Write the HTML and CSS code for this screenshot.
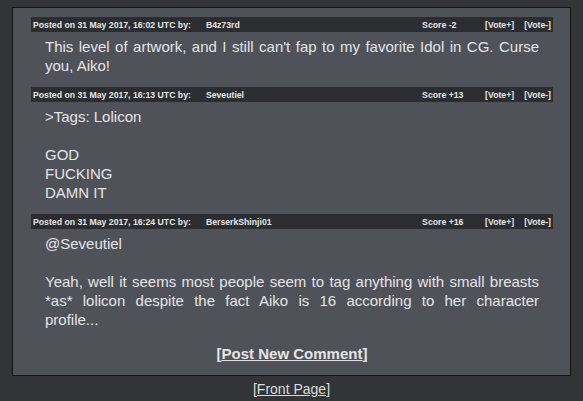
FILE: index.html
```html
<!DOCTYPE html>
<html>
<head>
<meta charset="utf-8">
<link rel="stylesheet" href="styles.css">
</head>
<body>
<div class="panel">
  <div class="comment">
    <div class="bar">
      <span class="posted">Posted on 31 May 2017, 16:02 UTC by:</span>
      <span class="user">B4z73rd</span>
      <span class="score">Score -2</span>
      <span class="vote vp">[Vote+]</span>
      <span class="vote">[Vote-]</span>
    </div>
    <div class="text">This level of artwork, and I still can't fap to my favorite Idol in CG. Curse you, Aiko!</div>
  </div>
  <div class="comment">
    <div class="bar">
      <span class="posted">Posted on 31 May 2017, 16:13 UTC by:</span>
      <span class="user">Seveutiel</span>
      <span class="score">Score +13</span>
      <span class="vote vp">[Vote+]</span>
      <span class="vote">[Vote-]</span>
    </div>
    <div class="text">&gt;Tags: Lolicon<br><br>GOD<br>FUCKING<br>DAMN IT</div>
  </div>
  <div class="comment">
    <div class="bar">
      <span class="posted">Posted on 31 May 2017, 16:24 UTC by:</span>
      <span class="user">BerserkShinji01</span>
      <span class="score">Score +16</span>
      <span class="vote vp">[Vote+]</span>
      <span class="vote">[Vote-]</span>
    </div>
    <div class="text justify-all">@Seveutiel<br><br>Yeah, well it seems most people seem to tag anything with small breasts *as* lolicon despite the fact Aiko is 16 according to her character<br>profile...</div>
  </div>
  <div class="postnew">[<a href="#">Post New Comment</a>]</div>
</div>
<div class="footer">[<a href="#">Front Page</a>]</div>
</body>
</html>
```
FILE: styles.css
```css
html, body {
  margin: 0;
  padding: 0;
  background: #333438;
}
body {
  padding: 7px 12px 0 12px;
  font-family: "Liberation Sans", Arial, sans-serif;
  color: #e4e4e6;
}
.panel {
  background: #50525a;
  border: 1px solid #141416;
  padding: 9px 17px 12px 18px;
}
.comment {
  margin-bottom: 12px;
}
.bar {
  display: flex;
  align-items: center;
  height: 15px;
  background: #2c2d31;
  font-size: 8.7px;
  font-weight: bold;
  color: #e6e6e6;
  padding: 0 2px;
  white-space: nowrap;
}
.user {
  margin-left: 15px;
}
.score {
  margin-left: auto;
  width: 63px;
}
.vp {
  margin-right: 10px;
}
.text {
  font-size: 15px;
  line-height: 19px;
  padding: 5px 14px 0 14px;
  text-align: justify;
}
.justify-all {
  text-align-last: justify;
}
.postnew {
  text-align: center;
  font-size: 15px;
  font-weight: bold;
  line-height: 19px;
  margin-top: 15px;
}
.postnew a, .footer a {
  color: inherit;
  text-decoration: underline;
}
.footer {
  text-align: center;
  font-size: 14px;
  line-height: 16px;
  margin-top: 5px;
  color: #dcdcdc;
}
```
